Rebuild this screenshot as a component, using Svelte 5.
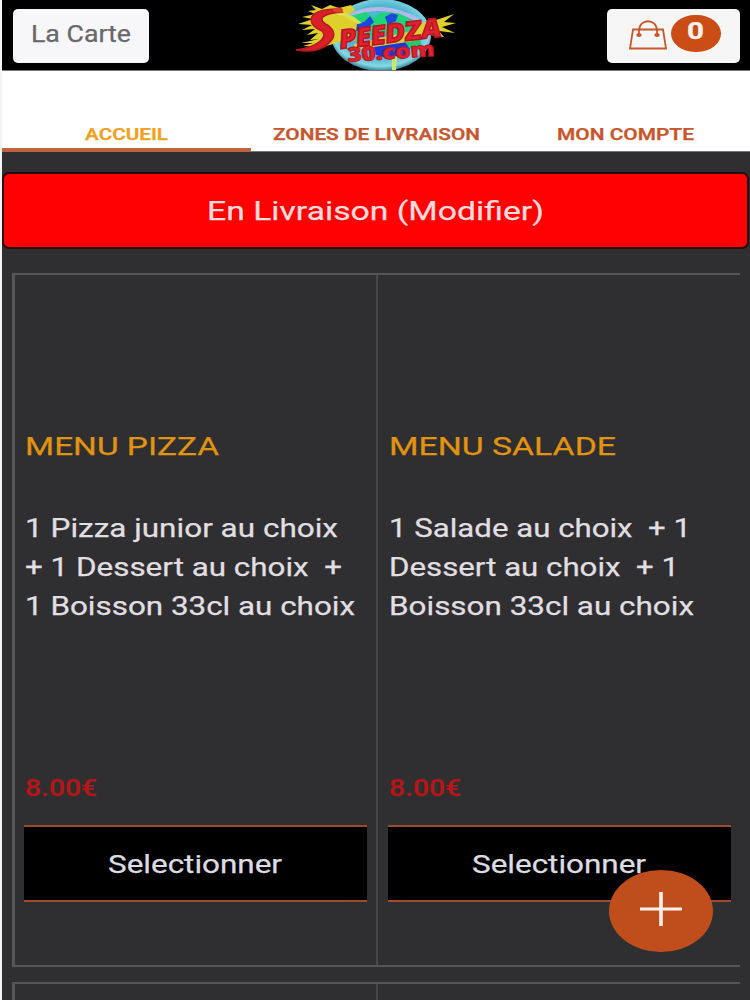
<script>
  const tabs = [
    { label: 'ACCUEIL', width: 83, active: true },
    { label: 'ZONES DE LIVRAISON', width: 207 },
    { label: 'MON COMPTE', width: 137 }
  ];
  const menus = [
    {
      title: ['MENU PIZZA', 194],
      lines: [
        ['1 Pizza junior au choix', 313],
        ['+ 1 Dessert au choix \u00a0+', 317],
        ['1 Boisson 33cl au choix', 330]
      ],
      price: '8.00€'
    },
    {
      title: ['MENU SALADE', 227],
      lines: [
        ['1 Salade au choix \u00a0+ 1', 302],
        ['Dessert au choix \u00a0+ 1', 290],
        ['Boisson 33cl au choix', 305]
      ],
      price: '8.00€'
    }
  ];
</script>

{#snippet wide(text, width, size, height, weight = 400)}
  <svg class="wide" {width} {height} viewBox="0 0 {width} {height}">
    <text x="0" y={height / 2 + size * 0.355} font-size={size} font-weight={weight} textLength={width} lengthAdjust="spacingAndGlyphs">{text}</text>
  </svg>
{/snippet}

<div class="page">
  <header>
    <button class="carte">{@render wide('La Carte', 100, 23.5, 30)}</button>
    <svg class="logo" width="170" height="70" viewBox="0 0 170 70">
      <defs>
        <radialGradient id="globe" cx=".5" cy=".45" r=".55">
          <stop offset="0" stop-color="#41c9d8" />
          <stop offset=".65" stop-color="#4fb4cf" />
          <stop offset=".88" stop-color="#86d8e4" />
          <stop offset="1" stop-color="#2f7f96" />
        </radialGradient>
      </defs>
      <ellipse cx="93" cy="35" rx="50" ry="36" fill="url(#globe)" />
      <path d="M62 16Q76 8 94 9T130 20" fill="none" stroke="#b4b8e8" stroke-width="4" />
      <path d="M50 28l12-12 16-4 8 6 6-5 18 0 14 7 8 8-14 6-66 4z" fill="#20d47c" />
      <path d="M56 22l9-2 3 4 8-2 6-6 4 6-6 6-14 4-12-2zM97 17l7-4 6 2-2 6-8 4z" fill="#1c48dc" />
      <path d="M80 44l20-4 23 3-2 12-26 2-13-4z" fill="#1838dc" />
      <path d="M116 40l16-1 2 8-13 1z" fill="#24c86a" />
      <path d="M104 56l5 1-1 13-4 0z" fill="#cce66a" />
      <path d="M51 8L42 5 34 9 23 5l5 5-8 1 7 3-13 3 11 2-15 5 14 1-10 5 13-1-8 6 11-2-8 7 9-1-18 4 12 0-10 3 20 1 10-3 10-4 12 1 2-18-3-6-6-2 7-5-4-5z" fill="#ded02c" />
      <path d="M50 9l16 8 8 6-4 1-13-7-9-3z" fill="#dce04a" />
      <path d="M128 24l20-4 18-6-10 8 12 1-14 4 13 6-16-2 5 6-14-2-16 6-60 9 0-6 54-12z" fill="#ded02c" />
      <path d="M50 9Q25 9 23 19Q23 27 34 31Q39 36 31 42Q23 48 8 50Q32 54 42 42Q50 34 41 26Q31 21 35 17Q40 13 54 12Z" fill="#d91f27" stroke="#b41a1e" stroke-width="1.5" />
      <ellipse cx="50" cy="10" rx="5" ry="2.5" fill="#e0402c" />
      <g class="logo-text" font-weight="900">
        <text transform="translate(51 49) rotate(-7) skewX(-10)" font-size="26" textLength="102" lengthAdjust="spacingAndGlyphs" stroke="#b4182a" stroke-width="1.6">PEEDZA</text>
        <text transform="translate(60 62) rotate(-4)" font-size="20" textLength="87" lengthAdjust="spacingAndGlyphs" stroke="#b4182a" stroke-width="1">30.com</text>
      </g>
    </svg>
    <button class="cart">
      <svg class="bag" width="38" height="31" viewBox="0 0 38 31" fill="none" stroke="#c9572c" stroke-width="1.8">
        <path d="M4 10.5H34L37 29.5H1Z" />
        <path d="M10 15V12C10-1 28-1 28 12V15" />
        <g fill="#c9572c" stroke="none"><ellipse cx="10" cy="16" rx="2.7" ry="2" /><ellipse cx="28" cy="16" rx="2.7" ry="2" /></g>
      </svg>
      <span class="count">{@render wide('0', 17, 23, 28, 700)}</span>
    </button>
  </header>

  <nav>
    {#each tabs as tab}
      <div class="tab" class:active={tab.active}>{@render wide(tab.label, tab.width, 17, 24, 600)}</div>
    {/each}
  </nav>

  <main>
    <button class="mode">{@render wide('En Livraison (Modifier)', 337, 26, 40)}</button>
    <section class="grid">
      {#each menus as menu}
        <article>
          <h2>{@render wide(menu.title[0], menu.title[1], 26.5, 38)}</h2>
          <div class="desc">
            {#each menu.lines as [text, width]}
              {@render wide(text, width, 26, 39)}
            {/each}
          </div>
          <div class="price">{@render wide(menu.price, 72, 23, 30, 500)}</div>
          <button class="select">{@render wide('Selectionner', 174, 26.5, 40)}</button>
        </article>
      {/each}
    </section>
    <section class="grid next"><article></article><article></article></section>
  </main>

  <button class="fab" aria-label="Ajouter">
    <svg width="44" height="36" viewBox="0 0 44 36" stroke="#fff0e8" fill="none"><path d="M22 1V35" stroke-width="3.6" /><path d="M1 18H43" stroke-width="3" /></svg>
  </button>
</div>

<style>
  :global(body) { margin: 0; background: #f4f3f5; }
  * { box-sizing: border-box; }
  .page {
    position: relative;
    width: 748px;
    height: 1000px;
    margin-left: 2px;
    overflow: hidden;
    background: #2f2e30;
    font-family: Roboto, sans-serif;
    display: flex;
    flex-direction: column;
  }
  button { font: inherit; border: 0; padding: 0; margin: 0; display: flex; align-items: center; justify-content: center; }
  .wide { display: block; overflow: visible; fill: currentColor; stroke: currentColor; stroke-width: .25px; flex: none; }
  header {
    height: 71px;
    flex: none;
    display: flex;
    align-items: flex-start;
    padding: 0 10px 0 11px;
    background: #000;
    border-bottom: 1px solid #77777a;
  }
  .carte { width: 136px; height: 54px; margin-top: 9px; padding-bottom: 5px; border-radius: 5px; background: #f7f6f8; color: #68676a; }
  .logo { display: block; margin-left: 139px; }
  .logo-text { fill: #e4202b; font-family: "Open Sans", sans-serif; }
  .cart { width: 133px; height: 54px; margin: 9px 0 0 auto; padding: 0 0 6px 2px; border-radius: 5px; background: #f7f6f7; gap: 4px; }
  .bag { margin-top: 3px; }
  .count { width: 50px; height: 37px; border-radius: 50% / 52%; background: #cb4d16; color: #fff3ec; display: flex; align-items: center; justify-content: center; padding-bottom: 4px; }
  nav { height: 81px; flex: none; display: grid; grid-template-columns: repeat(3, 1fr); background: #fff; color: #c8562d; }
  .tab { display: flex; justify-content: center; align-items: flex-end; padding: 0 0 5px 1px; border-bottom: 1px solid #777; }
  .tab.active { color: #f0a020; padding: 0 0 2px; border-bottom: 4px solid #bd6340; }
  main { flex: 1; display: flex; flex-direction: column; padding-top: 20px; }
  .mode { height: 77px; margin: 0 1px 0 0; flex: none; border: 2px solid #260c0c; border-radius: 7px; background: #ff0003; color: #ffdcdc; }
  .grid { display: grid; grid-template-columns: 363px 1fr; margin: 24px 10px 0 10px; height: 694px; flex: none; border: 2px solid #565557; border-left-width: 3px; border-right: 0; }
  article { display: flex; flex-direction: column; padding: 152px 9px 0 10px; min-width: 0; }
  article:first-child { border-right: 2px solid #474648; }
  article:last-child { padding-left: 11px; }
  h2 { margin: 0; color: #e0940f; font-weight: 400; }
  .desc { margin-top: 43px; color: #e0dfe1; }
  .price { margin-top: 148px; color: #b51718; }
  .select { height: 77px; margin: 22px 0 0 -1px; padding-right: 1px; background: #000; color: #dddce0; border-top: 2px solid #9c4c2c; border-bottom: 2px solid #9c4c2c; }
  .grid.next { margin-top: 15px; }
  .fab { position: absolute; left: 607px; top: 870px; width: 104px; height: 82px; border-radius: 50%; background: #c04e1d; padding-bottom: 5px; }
</style>
